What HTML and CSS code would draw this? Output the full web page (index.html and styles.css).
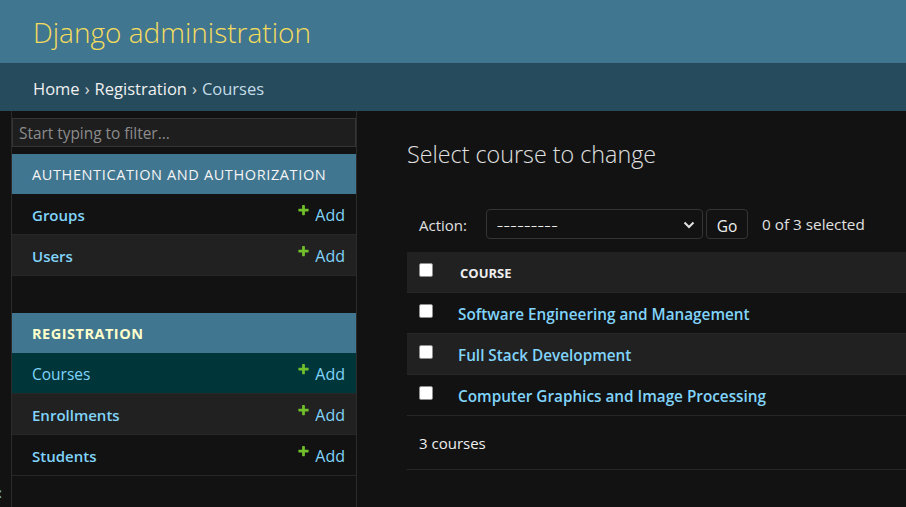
FILE: index.html
```html
<!DOCTYPE html>
<html lang="en">
<head>
<meta charset="utf-8">
<title>Select course to change | Django site admin</title>
<link rel="stylesheet" href="styles.css">
</head>
<body>
<header class="header">
  <h1 class="site-name">Django administration</h1>
</header>
<nav class="breadcrumbs">
  <a class="crumb-link" href="#">Home</a><span class="sep">›</span><a class="crumb-link" href="#">Registration</a><span class="sep">›</span><span class="crumb-current">Courses</span>
</nav>
<div class="main">
  <div class="toggle"><span class="toggle-glyph">«</span></div>
  <aside class="sidebar">
    <div class="filter"><span class="placeholder">Start typing to filter...</span></div>
    <div class="module">
      <div class="caption">AUTHENTICATION AND AUTHORIZATION</div>
      <div class="row row-light"><a class="model" href="#">Groups</a><a class="add" href="#"><svg class="plus" viewBox="0 0 1792 1792"><path fill="#70bf2b" d="M1600 736v192q0 40-28 68t-68 28h-416v416q0 40-28 68t-68 28h-192q-40 0-68-28t-28-68v-416h-416q-40 0-68-28t-28-68v-192q0-40 28-68t68-28h416v-416q0-40 28-68t68-28h192q40 0 68 28t28 68v416h416q40 0 68 28t28 68z"/></svg>Add</a></div>
      <div class="row row-dark"><a class="model" href="#">Users</a><a class="add" href="#"><svg class="plus" viewBox="0 0 1792 1792"><path fill="#70bf2b" d="M1600 736v192q0 40-28 68t-68 28h-416v416q0 40-28 68t-68 28h-192q-40 0-68-28t-28-68v-416h-416q-40 0-68-28t-28-68v-192q0-40 28-68t68-28h416v-416q0-40 28-68t68-28h192q40 0 68 28t28 68v416h416q40 0 68 28t28 68z"/></svg>Add</a></div>
    </div>
    <div class="module">
      <div class="caption caption-current">REGISTRATION</div>
      <div class="row row-selected"><a class="model model-current" href="#">Courses</a><a class="add" href="#"><svg class="plus" viewBox="0 0 1792 1792"><path fill="#70bf2b" d="M1600 736v192q0 40-28 68t-68 28h-416v416q0 40-28 68t-68 28h-192q-40 0-68-28t-28-68v-416h-416q-40 0-68-28t-28-68v-192q0-40 28-68t68-28h416v-416q0-40 28-68t68-28h192q40 0 68 28t28 68v416h416q40 0 68 28t28 68z"/></svg>Add</a></div>
      <div class="row row-dark"><a class="model" href="#">Enrollments</a><a class="add" href="#"><svg class="plus" viewBox="0 0 1792 1792"><path fill="#70bf2b" d="M1600 736v192q0 40-28 68t-68 28h-416v416q0 40-28 68t-68 28h-192q-40 0-68-28t-28-68v-416h-416q-40 0-68-28t-28-68v-192q0-40 28-68t68-28h416v-416q0-40 28-68t68-28h192q40 0 68 28t28 68v416h416q40 0 68 28t28 68z"/></svg>Add</a></div>
      <div class="row row-light"><a class="model" href="#">Students</a><a class="add" href="#"><svg class="plus" viewBox="0 0 1792 1792"><path fill="#70bf2b" d="M1600 736v192q0 40-28 68t-68 28h-416v416q0 40-28 68t-68 28h-192q-40 0-68-28t-28-68v-416h-416q-40 0-68-28t-28-68v-192q0-40 28-68t68-28h416v-416q0-40 28-68t68-28h192q40 0 68 28t28 68v416h416q40 0 68 28t28 68z"/></svg>Add</a></div>
    </div>
  </aside>
  <main class="content">
    <h1 class="title">Select course to change</h1>
    <div class="actions">
      <span class="action-label">Action:</span>
      <div class="select"><span class="dashes">–––––––––</span><svg class="chevron" viewBox="0 0 12 8"><path d="M1.5 1.5 L6 6 L10.5 1.5" fill="none" stroke="#e0e0e0" stroke-width="2"/></svg></div>
      <button class="go">Go</button>
      <span class="counter">0 of 3 selected</span>
    </div>
    <div class="results">
      <div class="thead"><span class="cb-cell"><span class="checkbox"></span></span><span class="th">COURSE</span></div>
      <div class="tr tr-light"><span class="cb-cell"><span class="checkbox"></span></span><a class="course" href="#">Software Engineering and Management</a></div>
      <div class="tr tr-dark"><span class="cb-cell"><span class="checkbox"></span></span><a class="course" href="#">Full Stack Development</a></div>
      <div class="tr tr-light"><span class="cb-cell"><span class="checkbox"></span></span><a class="course" href="#">Computer Graphics and Image Processing</a></div>
    </div>
    <p class="paginator">3 courses</p>
  </main>
</div>
</body>
</html>
```

FILE: styles.css
```css
* { box-sizing: border-box; }
html, body { margin: 0; padding: 0; }
body {
  background: #121212;
  color: #eeeeee;
  font-family: "Open Sans", "Noto Sans", sans-serif;
  width: 906px;
  height: 507px;
  overflow: hidden;
}
a { text-decoration: none; }

.header {
  height: 63px;
  background: #417690;
  display: flex;
  align-items: center;
  padding-left: 33px;
}
.site-name {
  margin: 0;
  font-size: 28px;
  font-weight: 300;
  color: #f5dd5d;
  line-height: 1;
}

.breadcrumbs {
  height: 48px;
  background: #264b5d;
  display: flex;
  align-items: center;
  padding-left: 33px;
  padding-top: 2px;
  font-size: 16.5px;
  color: #c4dce8;
}
.crumb-link { color: #f0f0f0; }
.crumb-current { color: #c4dce8; }
.sep { margin: 0 5px; color: #e0e0e0; }

.main {
  display: flex;
  height: 396px;
}
.toggle {
  width: 12px;
  border-right: 1px solid #2b2b2b;
  display: flex;
  flex-direction: column;
  justify-content: flex-end;
  overflow: hidden;
  padding-bottom: 6px;
}
.toggle-glyph {
  color: #81d4fa;
  font-size: 18px;
  margin-left: -7px;
  line-height: 1;
}

.sidebar {
  width: 345px;
  border-right: 1px solid #2b2b2b;
  padding-top: 7px;
}
.filter {
  height: 29px;
  background: #1e1e1e;
  border: 1px solid #353535;
  display: flex;
  align-items: center;
  padding-left: 6px;
  padding-top: 2px;
  margin-bottom: 7px;
}
.placeholder {
  color: #8c8c8c;
  font-size: 15.4px;
}
.module { margin-bottom: 37px; }
.caption {
  height: 40px;
  background: #417690;
  color: #f4f4f4;
  display: flex;
  align-items: center;
  padding-left: 20px;
  font-size: 14.5px;
  letter-spacing: 0.62px;
}
.caption-current {
  color: #ffffcc;
  font-weight: 700;
  letter-spacing: 0.5px;
}
.row {
  height: 41px;
  border-bottom: 1px solid #272727;
  display: flex;
  align-items: center;
  justify-content: space-between;
  padding: 2px 11px 0 20px;
}
.row-light { background: #121212; }
.row-dark { background: #212121; }
.row-selected { background: #00363a; }
.model {
  color: #81d4fa;
  font-weight: 600;
  font-size: 15px;
}
.model-current { font-weight: 400; font-size: 15.5px; }
.add {
  color: #81d4fa;
  font-size: 16px;
  display: flex;
  align-items: center;
}
.plus {
  width: 13px;
  height: 13px;
  margin-right: 5px;
  position: relative;
  top: -5px;
}

.content {
  flex: 1;
  padding: 25px 0 0 50px;
  min-width: 0;
}
.title {
  margin: 0;
  font-size: 23.3px;
  font-weight: 300;
  color: #e0e0e0;
  line-height: 36px;
}
.actions {
  margin-top: 37px;
  height: 30px;
  display: flex;
  align-items: center;
  padding-left: 12px;
  color: #e0e0e0;
  font-size: 15px;
}
.action-label { width: 67px; padding-top: 2px; }
.select {
  width: 217px;
  height: 30px;
  border: 1px solid #353535;
  border-radius: 4px;
  background: #121212;
  display: flex;
  align-items: center;
  justify-content: space-between;
  padding: 2px 7px 0 10px;
  font-size: 15px;
  color: #eeeeee;
}
.dashes { font-size: 12px; letter-spacing: 0.8px; }
.chevron { width: 12px; height: 8px; }
.go {
  margin-left: 3px;
  width: 42px;
  height: 30px;
  border: 1px solid #353535;
  border-radius: 4px;
  background: #121212;
  color: #eeeeee;
  font-family: inherit;
  font-size: 15.5px;
  padding: 3px 0 0;
}
.counter { margin-left: 14px; font-size: 15.3px; }

.results { margin-top: 13px; }
.thead, .tr {
  display: flex;
  align-items: center;
  border-bottom: 1px solid #272727;
}
.thead {
  height: 41px;
  background: #212121;
  padding-top: 1px;
}
.tr { height: 41px; padding-top: 2px; }
.tr-light { background: #121212; }
.tr-dark { background: #212121; }
.cb-cell {
  width: 51px;
  padding-left: 12px;
  display: flex;
  align-self: stretch;
  align-items: center;
  padding-bottom: 6px;
}
.checkbox {
  width: 14px;
  height: 14px;
  background: #ffffff;
  border: 1px solid #8f8f8f;
  border-radius: 2px;
}
.th {
  margin-left: 2px;
  font-size: 13px;
  font-weight: 700;
  color: #eeeeee;
}
.course {
  color: #81d4fa;
  font-weight: 600;
  font-size: 15.3px;
}
.paginator {
  margin: 0;
  height: 54px;
  border-bottom: 1px solid #272727;
  display: flex;
  align-items: center;
  padding-left: 12px;
  font-size: 15px;
  color: #eeeeee;
}
```
